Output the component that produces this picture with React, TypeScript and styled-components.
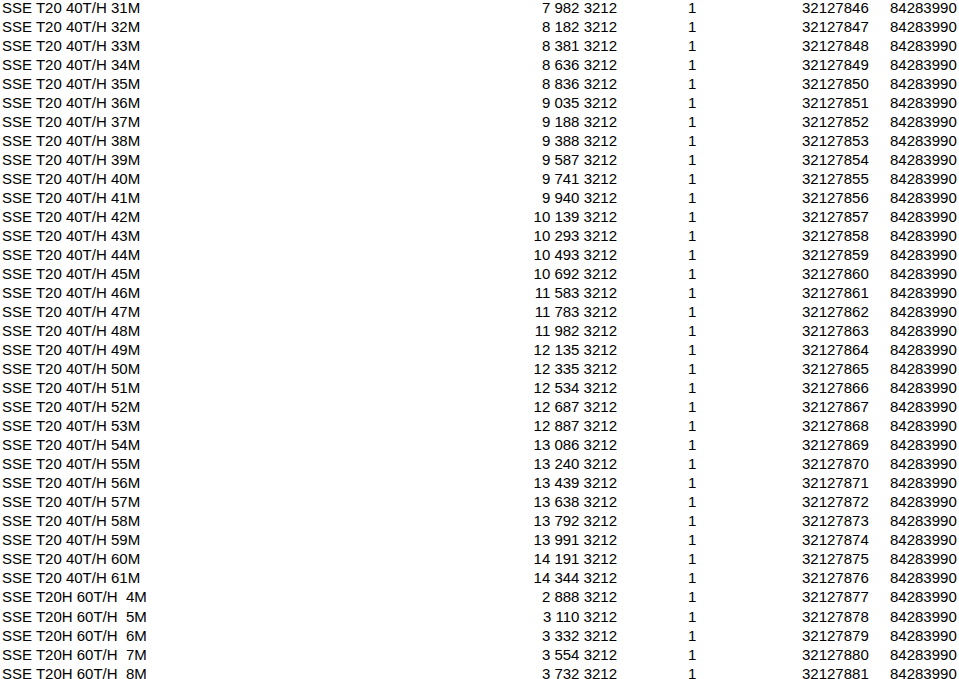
import React from "react";
import styled, { createGlobalStyle } from "styled-components";

const GlobalStyle = createGlobalStyle`
  html, body {
    margin: 0;
    padding: 0;
    background: #ffffff;
  }
  body {
    font-family: "Liberation Sans", Arial, sans-serif;
    color: #000;
  }
`;

const Sheet = styled.div`
  display: grid;
  grid-template-columns: 528px 87px 185px 88px 1fr;
  grid-auto-rows: 19.03px;
  padding-left: 2px;
  margin-top: -2px;
  font-size: 15px;
  line-height: 19.03px;
  white-space: pre;
`;

const Cell = styled.div<{ $align?: "left" | "right"; $indent?: number }>`
  text-align: ${({ $align }) => $align ?? "left"};
  padding-left: ${({ $indent }) => $indent ?? 0}px;
`;

type Row = {
  name: string;
  amount: string;
  qty: string;
  code: string;
  ref: string;
};

const base = [
  ["SSE T20 40T/H 31M", "7 982 3212"],
  ["SSE T20 40T/H 32M", "8 182 3212"],
  ["SSE T20 40T/H 33M", "8 381 3212"],
  ["SSE T20 40T/H 34M", "8 636 3212"],
  ["SSE T20 40T/H 35M", "8 836 3212"],
  ["SSE T20 40T/H 36M", "9 035 3212"],
  ["SSE T20 40T/H 37M", "9 188 3212"],
  ["SSE T20 40T/H 38M", "9 388 3212"],
  ["SSE T20 40T/H 39M", "9 587 3212"],
  ["SSE T20 40T/H 40M", "9 741 3212"],
  ["SSE T20 40T/H 41M", "9 940 3212"],
  ["SSE T20 40T/H 42M", "10 139 3212"],
  ["SSE T20 40T/H 43M", "10 293 3212"],
  ["SSE T20 40T/H 44M", "10 493 3212"],
  ["SSE T20 40T/H 45M", "10 692 3212"],
  ["SSE T20 40T/H 46M", "11 583 3212"],
  ["SSE T20 40T/H 47M", "11 783 3212"],
  ["SSE T20 40T/H 48M", "11 982 3212"],
  ["SSE T20 40T/H 49M", "12 135 3212"],
  ["SSE T20 40T/H 50M", "12 335 3212"],
  ["SSE T20 40T/H 51M", "12 534 3212"],
  ["SSE T20 40T/H 52M", "12 687 3212"],
  ["SSE T20 40T/H 53M", "12 887 3212"],
  ["SSE T20 40T/H 54M", "13 086 3212"],
  ["SSE T20 40T/H 55M", "13 240 3212"],
  ["SSE T20 40T/H 56M", "13 439 3212"],
  ["SSE T20 40T/H 57M", "13 638 3212"],
  ["SSE T20 40T/H 58M", "13 792 3212"],
  ["SSE T20 40T/H 59M", "13 991 3212"],
  ["SSE T20 40T/H 60M", "14 191 3212"],
  ["SSE T20 40T/H 61M", "14 344 3212"],
  ["SSE T20H 60T/H  4M", "2 888 3212"],
  ["SSE T20H 60T/H  5M", "3 110 3212"],
  ["SSE T20H 60T/H  6M", "3 332 3212"],
  ["SSE T20H 60T/H  7M", "3 554 3212"],
  ["SSE T20H 60T/H  8M", "3 732 3212"],
];

const rows: Row[] = base.map(([name, amount], i) => ({
  name,
  amount,
  qty: "1",
  code: String(32127846 + i),
  ref: "84283990",
}));

export default function App() {
  return (
    <>
      <GlobalStyle />
      <Sheet>
        {rows.map((r) => (
          <React.Fragment key={r.code}>
            <Cell>{r.name}</Cell>
            <Cell $align="right">{r.amount}</Cell>
            <Cell $indent={71}>{r.qty}</Cell>
            <Cell>{r.code}</Cell>
            <Cell>{r.ref}</Cell>
          </React.Fragment>
        ))}
      </Sheet>
    </>
  );
}
